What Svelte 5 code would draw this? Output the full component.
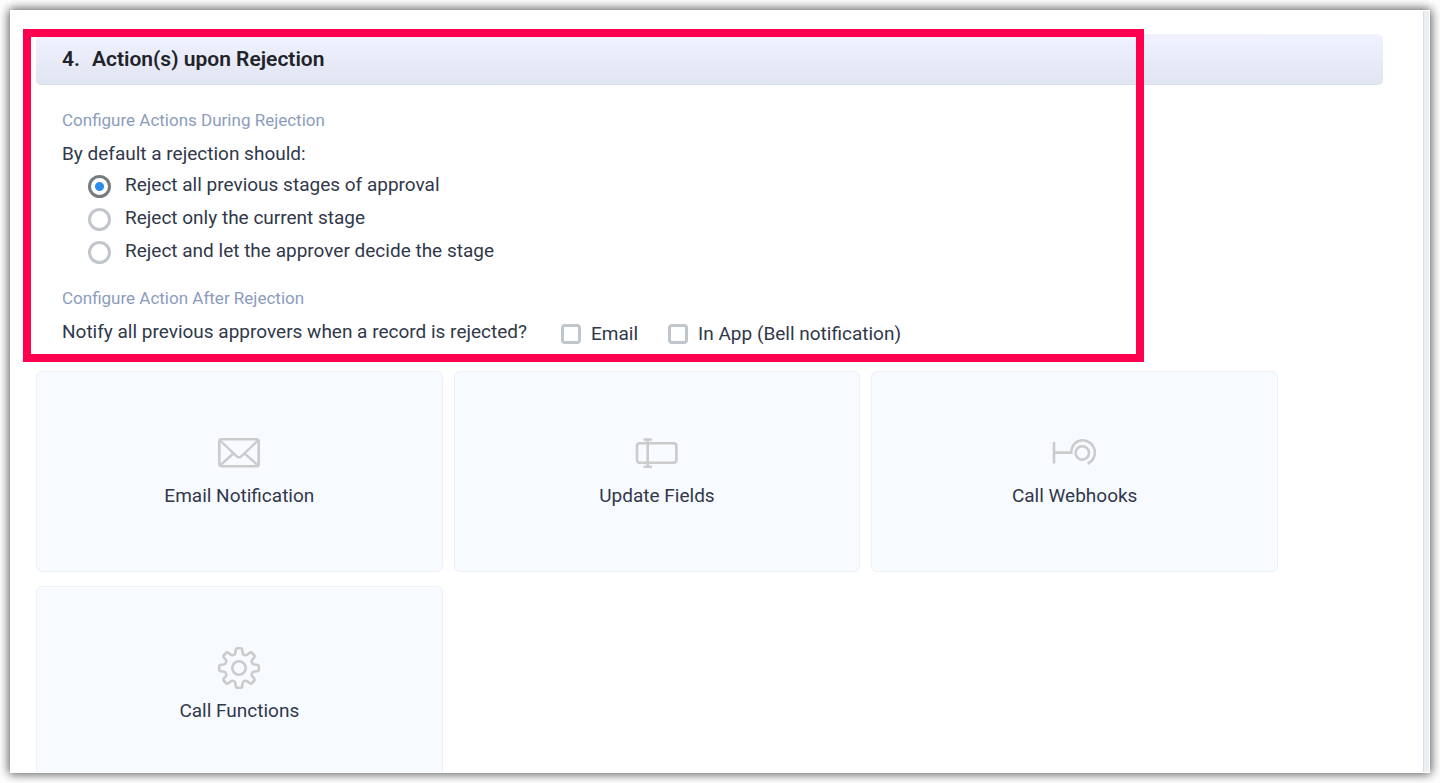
<script>
	let rejection = 'all';
	let notifyEmail = false;
	let notifyInApp = false;

	const options = [
		{ id: 'all', label: 'Reject all previous stages of approval' },
		{ id: 'current', label: 'Reject only the current stage' },
		{ id: 'approver', label: 'Reject and let the approver decide the stage' },
	];

	const actions = [
		{ icon: 'mail', label: 'Email Notification' },
		{ icon: 'field', label: 'Update Fields' },
		{ icon: 'hook', label: 'Call Webhooks' },
		{ icon: 'gear', label: 'Call Functions' },
	];

	// One tooth of the gear around 0,0, repeated every 45 degrees
	function gearPath() {
		let d = '';
		for (let i = 0; i < 8; i++) {
			const a = (i * Math.PI) / 4;
			const p = (x, y) => `${(x * Math.cos(a) - y * Math.sin(a)).toFixed(2)} ${(x * Math.sin(a) + y * Math.cos(a)).toFixed(2)} `;
			d += (i ? 'L' : 'M') + p(-5.36, -12.93);
			d += 'Q' + p(-3.7, -13.7) + p(-3.5, -15.5) + 'L' + p(-3.3, -18);
			d += 'Q' + p(-3, -19.8) + p(-1.4, -19.8) + 'L' + p(1.4, -19.8);
			d += 'Q' + p(3, -19.8) + p(3.3, -18) + 'L' + p(3.5, -15.5);
			d += 'Q' + p(3.7, -13.7) + p(5.36, -12.93);
		}
		return d + 'Z';
	}
</script>

<div class="page">
	<main class="panel">
		<div class="content">
			<section class="rejection">
				<h2><span>4.</span>Action(s) upon Rejection</h2>

				<div class="settings">
					<h3>Configure Actions During Rejection</h3>
					<fieldset>
						<legend>By default a rejection should:</legend>
						{#each options as option}
							<label class="option">
								<input type="radio" name="rejection" value={option.id} bind:group={rejection}>
								<span>{option.label}</span>
							</label>
						{/each}
					</fieldset>

					<h3>Configure Action After Rejection</h3>
					<div class="notify">
						<p>Notify all previous approvers when a record is rejected?</p>
						<label class="check">
							<input type="checkbox" bind:checked={notifyEmail}>
							<span>Email</span>
						</label>
						<label class="check">
							<input type="checkbox" bind:checked={notifyInApp}>
							<span>In App (Bell notification)</span>
						</label>
					</div>
				</div>

				<div class="highlight"></div>
			</section>

			<div class="cards">
				{#each actions as action}
					<button class="card">
						<svg width="46" height="46" viewBox="0 0 46 46" fill="none" stroke="currentColor" stroke-width="2.6" aria-hidden="true">
							{#if action.icon === 'mail'}
								<rect x="3.3" y="9.3" width="39.4" height="27" rx="2.4" />
								<path d="M4 10.5l16.8 15.8q2.2 2 4.4 0L42 10.5M4 35.5l13.4-12M42 35.5l-13.4-12" stroke-width="2.4" />
							{:else if action.icon === 'field'}
								<rect x="3" y="13.3" width="39.4" height="19.5" rx="2.8" />
								<path d="M13.7 9v28.5M9.5 9.5h8.4M9.500 36.8h8.4" />
							{:else if action.icon === 'hook'}
								<path d="M2 12v21.500M2 22.6h17.3C19.300 15 24.500 10.200 30.700 10.200a12.300 12.300 0 0 1 5 23.500" />
								<circle cx="30.300" cy="22.900" r="6.700" />
							{:else}
								<path d={gearPath()} transform="translate(23 23)" />
								<circle cx="23" cy="23" r="6.7" />
							{/if}
						</svg>
						<span>{action.label}</span>
					</button>
				{/each}
			</div>
		</div>
		<div class="rail"></div>
	</main>
</div>

<style>
	:global(body) {
		background: #fff;
	}

	.page {
		box-sizing: border-box;
		height: 100vh;
		padding: 10px;
		font-family: Roboto, "Liberation Sans", sans-serif;
		font-size: 19px;
		line-height: 33px;
		color: #30384a;
		overflow: hidden;
	}

	.panel {
		display: flex;
		box-sizing: border-box;
		height: 100%;
		padding: 1px;
		background: #fff;
		box-shadow: 0 0 10px 1px #000000b0;
	}

	.content {
		flex: 1;
		padding: 23px 40px 0 25px;
		overflow: hidden;
	}

	.rail {
		width: 5px;
		background: #ebeff4;
		border-left: 1px solid #d5dfea;
	}

	.rejection {
		position: relative;
	}

	h2, h3, p {
		margin: 0;
	}

	h2 {
		display: flex;
		gap: 12px;
		box-sizing: border-box;
		height: 51px;
		padding: 9px 26px;
		font-size: 21px;
		font-weight: 600;
		color: #212329;
		background: linear-gradient(#f0f3ff, #e1e5f1);
		border-bottom: 1px solid #d8e0ec;
		border-radius: 5px;
	}

	.settings {
		padding: 19px 26px 23px;
	}

	h3 {
		font-size: 17px;
		font-weight: 400;
		color: #8c9cbd;
	}

	fieldset {
		margin: 0 0 13px;
		padding: 0;
		border: 0;
	}

	legend {
		padding: 0;
	}

	.option {
		display: flex;
		align-items: center;
		gap: 14px;
		padding-left: 26px;
	}

	.option span {
		padding-bottom: 3px;
		line-height: 30px;
	}

	input {
		appearance: none;
		box-sizing: border-box;
		flex: none;
		margin: 0;
		background: #fff;
		border: 3px solid #c1c6cc;
	}

	input[type=radio] {
		width: 23px;
		height: 23px;
		border-radius: 50%;
	}

	input[type=radio]:checked {
		border-color: #777c80;
		background: radial-gradient(circle, #2c8af3 4px, #fff 5px);
	}

	input[type=checkbox] {
		width: 20px;
		height: 20px;
		border-radius: 4px;
	}

	input[type=checkbox]:checked {
		background: #2c8af3;
	}

	.notify {
		display: flex;
		flex-wrap: wrap;
		gap: 30px;
	}

	.notify p {
		padding-right: 4px;
	}

	.check {
		display: flex;
		align-items: center;
		gap: 10px;
		padding-top: 2px;
		margin-bottom: -2px;
	}

	.highlight {
		position: absolute;
		top: -5px;
		bottom: 9px;
		left: -13px;
		right: 239px;
		border: 8px solid #ff004f;
		pointer-events: none;
	}

	.cards {
		display: grid;
		grid-template-columns: repeat(3, 1fr);
		gap: 14px 11px;
		padding-right: 105px;
	}

	.card {
		display: flex;
		flex-direction: column;
		align-items: center;
		justify-content: center;
		gap: 3px;
		height: 201px;
		padding: 0 0 2px;
		font: inherit;
		color: inherit;
		background: #f7faff;
		border: 1px solid #edf1f6;
		border-radius: 6px;
		cursor: pointer;
	}

	svg {
		color: #cbcbcb;
	}
</style>
